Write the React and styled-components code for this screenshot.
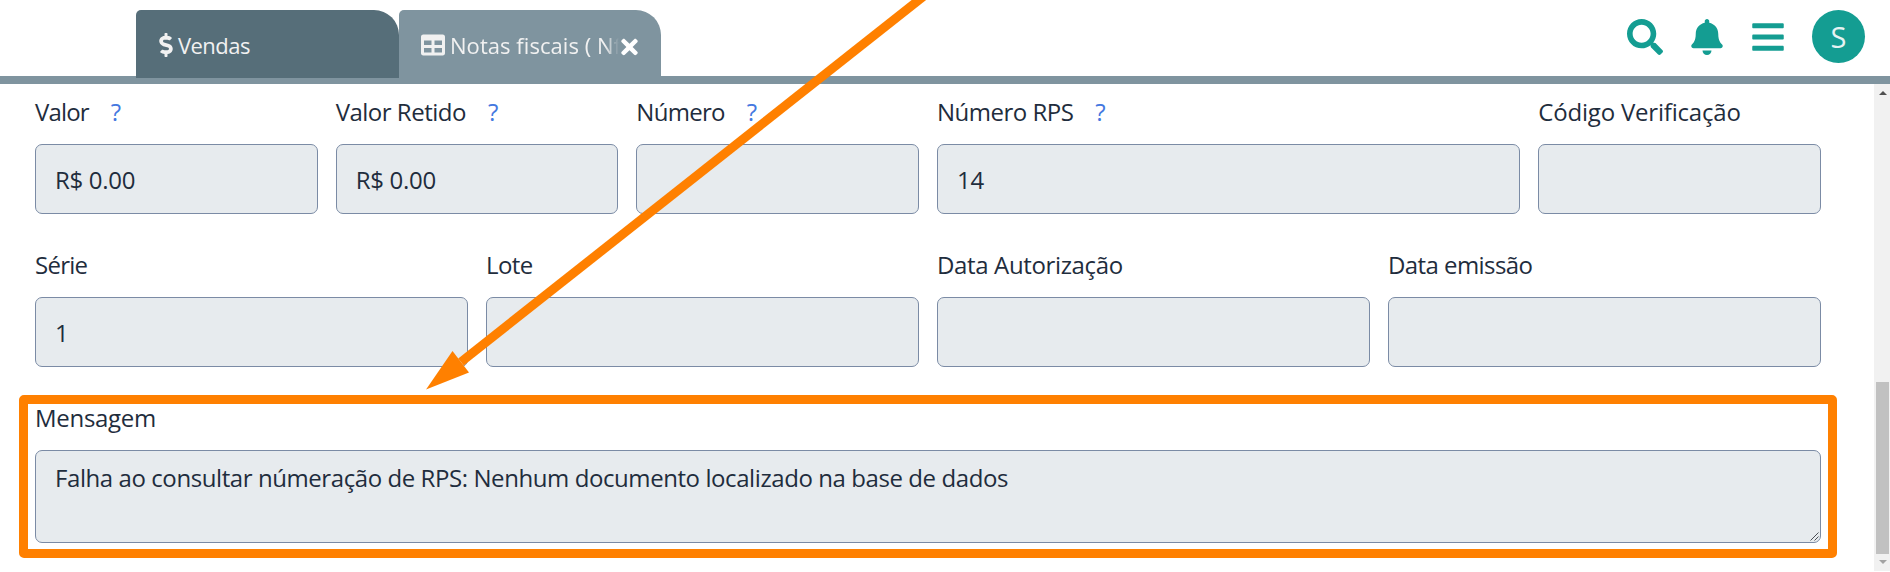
import React from "react";
import styled, { createGlobalStyle } from "styled-components";
import { FaDollarSign, FaTable, FaSearch, FaBell, FaBars, FaTimes } from "react-icons/fa";

const GlobalStyle = createGlobalStyle`
  * { box-sizing: border-box; }
  body {
    margin: 0;
    background: #fff;
    color: #1f2d3d;
    font-family: "Open Sans", "Noto Sans", sans-serif;
    font-size: 24px;
    overflow: hidden;
  }
`;

const Page = styled.div`
  position: relative;
  display: flex;
  flex-direction: column;
  width: 1890px;
  height: 572px;
  overflow: hidden;
`;

const Header = styled.header`
  flex: none;
  display: flex;
  justify-content: space-between;
  height: 84px;
  padding: 10px 25px 0 136px;
  background: linear-gradient(#fff 76px, #7f949f 76px);
`;

const Tabs = styled.nav`
  display: flex;
`;

const Tab = styled.div`
  display: flex;
  align-items: center;
  width: ${(p) => (p.$active ? 262 : 263)}px;
  height: ${(p) => (p.$active ? 74 : 68)}px;
  padding: 2px 22px ${(p) => (p.$active ? 6 : 0)}px ${(p) => (p.$active ? 22 : 23)}px;
  border-radius: 5px 25px 0 0;
  background: ${(p) => (p.$active ? "#7f949f" : "#566e79")};
  color: #f1f1f1;
`;

const TabIcon = styled.span`
  flex: none;
  display: flex;
  justify-content: center;
  width: ${(p) => p.$width}px;
  margin: -1px 5px 0 0;
`;

const TabLabel = styled.span`
  width: ${(p) => p.$width};
  font-size: 22px;
  line-height: 34px;
  letter-spacing: ${(p) => p.$tracking}px;
  white-space: nowrap;
  mask-image: ${(p) => (p.$fade ? "linear-gradient(90deg, #000 calc(100% - 14px), transparent)" : "none")};
`;

const CloseIcon = styled.span`
  flex: none;
  display: flex;
  justify-content: center;
  width: 17px;
  margin: 3px 0 0 2px;
  color: #fff;
`;

const Actions = styled.div`
  display: flex;
  align-items: flex-start;
  color: #149d92;
`;

const ActionIcon = styled.span`
  display: flex;
  margin: 8.5px ${(p) => p.$after}px 0 0;
`;

const Avatar = styled.div`
  display: flex;
  align-items: center;
  justify-content: center;
  width: 53px;
  height: 53px;
  border-radius: 50%;
  background: #149d92;
  color: #e6f3f2;
  font-size: 29px;
`;

const Body = styled.div`
  flex: 1;
  display: flex;
  min-height: 0;
`;

const Form = styled.main`
  flex: 1;
  display: flex;
  flex-direction: column;
  gap: 33px;
  padding: 10px 53px 0 35px;
`;

const Row = styled.div`
  display: grid;
  grid-template-columns: repeat(${(p) => p.$columns}, 1fr);
  gap: 18px;
`;

const Field = styled.div`
  grid-column: span ${(p) => p.$span || 1};
  min-width: 0;
`;

const Label = styled.label`
  display: flex;
  height: 50px;
  line-height: 36px;
  white-space: pre;
  letter-spacing: ${(p) => p.$tracking || 0}px;
`;

const Help = styled.span`
  margin-left: 22px;
  color: #4478e0;
  letter-spacing: 0;
`;

const Value = styled.div`
  height: 70px;
  padding: 1px 19px 0;
  border: 1px solid #7b8ba5;
  border-radius: 7px;
  background: #e7ebee;
  line-height: 68px;
  letter-spacing: ${(p) => p.$tracking || 0}px;
`;

const Message = styled.div`
  display: flex;
  justify-content: space-between;
  height: 93px;
  padding: 9px 1px 1px 19px;
  border: 1px solid #7b8ba5;
  border-radius: 7px;
  background: #e7ebee;
  line-height: 36px;
  letter-spacing: -0.42px;
`;

const Grip = styled.svg`
  align-self: flex-end;
`;

const Scrollbar = styled.div`
  flex: none;
  display: flex;
  flex-direction: column;
  align-items: center;
  width: 16px;
  height: 487px;
  padding: 7px 1px 7px 2px;
  background: #f1f1f1;
`;

const Arrow = styled.svg`
  flex: none;
`;

const Thumb = styled.div`
  width: 13px;
  height: 172px;
  margin: auto 0 6px;
  background: #c1c1c1;
`;

const Highlight = styled.div`
  position: absolute;
  left: 19px;
  top: 395px;
  width: 1818px;
  height: 163px;
  border: 9px solid #ff8000;
  border-radius: 5px;
`;

const Pointer = styled.svg`
  position: absolute;
  left: 0;
  top: 0;
`;

const rows = [
  {
    columns: 6,
    fields: [
      { label: "Valor", help: true, tracking: -0.85, value: "R$ 0.00" },
      { label: "Valor Retido", help: true, tracking: -0.5, value: "R$ 0.00" },
      { label: "Número", help: true, tracking: -0.7 },
      { label: "Número RPS", help: true, tracking: -0.5, value: "14", span: 2 },
      { label: "Código Verificação", tracking: -0.2 },
    ],
  },
  {
    columns: 4,
    fields: [
      { label: "Série", tracking: -0.75, value: "1" },
      { label: "Lote", tracking: -0.6 },
      { label: "Data Autorização", tracking: -0.36 },
      { label: "Data emissão", tracking: -0.57 },
    ],
  },
];

export default function App() {
  return (
    <Page>
      <GlobalStyle />
      <Header>
        <Tabs>
          <Tab>
            <TabIcon $width={14}><FaDollarSign size={24} /></TabIcon>
            <TabLabel $width="auto" $tracking={-0.55}>Vendas</TabLabel>
          </Tab>
          <Tab $active>
            <TabIcon $width={24}><FaTable size={24} /></TabIcon>
            <TabLabel $width="169px" $tracking={0.05} $fade>Notas fiscais ( Nf</TabLabel>
            <CloseIcon><FaTimes size={24} /></CloseIcon>
          </Tab>
        </Tabs>
        <Actions>
          <ActionIcon $after={25.5}><FaSearch size={36} /></ActionIcon>
          <ActionIcon $after={25}><FaBell size={36} /></ActionIcon>
          <ActionIcon $after={26.5}><FaBars size={36} /></ActionIcon>
          <Avatar>S</Avatar>
        </Actions>
      </Header>
      <Body>
        <Form>
          {rows.map((row) => (
            <Row key={row.columns} $columns={row.columns}>
              {row.fields.map((f) => (
                <Field key={f.label} $span={f.span}>
                  <Label $tracking={f.tracking}>
                    {f.label}
                    {f.help && <Help>?</Help>}
                  </Label>
                  <Value $tracking={-0.3}>{f.value}</Value>
                </Field>
              ))}
            </Row>
          ))}
          <Field>
            <Label $tracking={-0.3}>Mensagem</Label>
            <Message>
              Falha ao consultar númeração de RPS: Nenhum documento localizado na base de dados
              <Grip width="9" height="9" viewBox="0 0 9 9">
                <path d="M0.5 8.5L8.5 0.5M4.5 8.5L8.5 4.5" stroke="#4c5157" strokeWidth="1" />
              </Grip>
            </Message>
          </Field>
        </Form>
        <Scrollbar>
          <Arrow width="8" height="4" viewBox="0 0 8 4"><path d="M0 4L4 0L8 4Z" fill="#505050" /></Arrow>
          <Thumb />
          <Arrow width="8" height="4" viewBox="0 0 8 4"><path d="M0 0L4 4L8 0Z" fill="#a3a3a3" /></Arrow>
        </Scrollbar>
      </Body>
      <Highlight />
      <Pointer width="1000" height="400" viewBox="0 0 1000 400" fill="#ff8000">
        <path d="M929 -8L461 362" stroke="#ff8000" strokeWidth="9" />
        <path d="M426 389.5L452.5 351L469 372.5Z" />
      </Pointer>
    </Page>
  );
}
